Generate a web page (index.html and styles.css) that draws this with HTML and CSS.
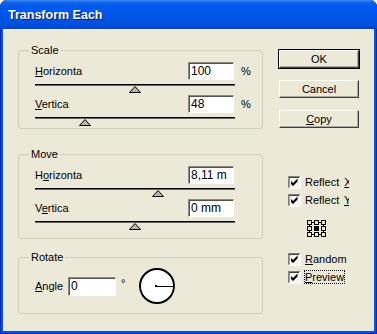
FILE: index.html
```html
<!DOCTYPE html>
<html>
<head>
	<title>Transform Each</title>
	<meta charset="utf-8">
	<link rel="stylesheet" href="styles.css">
</head>
<body>
<div class="window">
	<div class="titlebar">Transform Each</div>
	<div class="client">
		<div class="groups">
			<div class="group scale">
				<div class="group-title">Scale</div>
				<div class="row">
					<span class="label"><u>H</u>orizonta</span>
					<input class="field" type="text" value="100">
					<span class="unit">%</span>
				</div>
				<div class="slider">
					<svg class="thumb" style="left: 94px;" width="12" height="7" viewBox="0 0 12 7"><polygon points="6,0.5 11.5,6.5 0.5,6.5" fill="#b8b5a8" stroke="#000"/></svg>
				</div>
				<div class="row">
					<span class="label"><u>V</u>ertica</span>
					<input class="field" type="text" value="48">
					<span class="unit">%</span>
				</div>
				<div class="slider">
					<svg class="thumb" style="left: 44px;" width="12" height="7" viewBox="0 0 12 7"><polygon points="6,0.5 11.5,6.5 0.5,6.5" fill="#b8b5a8" stroke="#000"/></svg>
				</div>
			</div>

			<div class="group move">
				<div class="group-title">Move</div>
				<div class="row">
					<span class="label">H<u>o</u>rizonta</span>
					<input class="field" type="text" value="8,11 m">
				</div>
				<div class="slider">
					<svg class="thumb" style="left: 117px;" width="12" height="7" viewBox="0 0 12 7"><polygon points="6,0.5 11.5,6.5 0.5,6.5" fill="#b8b5a8" stroke="#000"/></svg>
				</div>
				<div class="row">
					<span class="label">V<u>e</u>rtica</span>
					<input class="field" type="text" value="0 mm">
				</div>
				<div class="slider">
					<svg class="thumb" style="left: 94px;" width="12" height="7" viewBox="0 0 12 7"><polygon points="6,0.5 11.5,6.5 0.5,6.5" fill="#b8b5a8" stroke="#000"/></svg>
				</div>
			</div>

			<div class="group rotate">
				<div class="group-title">Rotate</div>
				<div class="angle-row">
					<span class="angle-label"><u>A</u>ngle</span>
					<input class="field angle" type="text" value="0">
					<span class="degree">°</span>
					<svg class="dial" width="38" height="38" viewBox="0 0 38 38">
						<circle cx="19" cy="19" r="17" fill="#fff" stroke="#000" stroke-width="2"/>
						<line x1="18" y1="19.5" x2="36" y2="19.5" stroke="#000" stroke-width="1"/>
						<rect x="17" y="18" width="2" height="2" fill="#000"/>
					</svg>
				</div>
			</div>
		</div>

		<div class="side">
			<button class="btn default">OK</button>
			<button class="btn">Cancel</button>
			<button class="btn"><u>C</u>opy</button>

			<div class="checks">
				<label class="check">
					<svg width="13" height="13" viewBox="0 0 13 13"><rect x="0" y="0" width="13" height="13" fill="#fff"/><path d="M0 12.5V0.5H12" fill="none" stroke="#808080"/><path d="M1 11.5V1.5H11" fill="none" stroke="#404040"/><path d="M1 12.5H12.5V1" fill="none" stroke="#fff"/><rect x="2" y="2" width="10" height="10" fill="#f6f5f0"/><polygon points="3,5 5,7 9.5,2.5 9.5,5.5 5,10 3,8" fill="#000"/></svg>
					<span class="clip">Reflect <u>X</u></span>
				</label>
				<label class="check">
					<svg width="13" height="13" viewBox="0 0 13 13"><rect x="0" y="0" width="13" height="13" fill="#fff"/><path d="M0 12.5V0.5H12" fill="none" stroke="#808080"/><path d="M1 11.5V1.5H11" fill="none" stroke="#404040"/><path d="M1 12.5H12.5V1" fill="none" stroke="#fff"/><rect x="2" y="2" width="10" height="10" fill="#f6f5f0"/><polygon points="3,5 5,7 9.5,2.5 9.5,5.5 5,10 3,8" fill="#000"/></svg>
					<span class="clip">Reflect <u>Y</u></span>
				</label>

				<svg class="refpoint" width="19" height="17" viewBox="0 0 19 17">
					<g fill="none" stroke="#000">
						<line x1="5" y1="2.5" x2="7" y2="2.5"/>
						<line x1="12" y1="2.5" x2="14" y2="2.5"/>
						<line x1="5" y1="14.5" x2="7" y2="14.5"/>
						<line x1="12" y1="14.5" x2="14" y2="14.5"/>
						<line x1="2.5" y1="5" x2="2.5" y2="6"/>
						<line x1="2.5" y1="11" x2="2.5" y2="12"/>
						<line x1="16.5" y1="5" x2="16.5" y2="6"/>
						<line x1="16.5" y1="11" x2="16.5" y2="12"/>
						<rect x="0.5" y="0.5" width="4" height="4"/>
						<rect x="7.5" y="0.5" width="4" height="4"/>
						<rect x="14.5" y="0.5" width="4" height="4"/>
						<rect x="0.5" y="6.5" width="4" height="4"/>
						<rect x="14.5" y="6.5" width="4" height="4"/>
						<rect x="0.5" y="12.5" width="4" height="4"/>
						<rect x="7.5" y="12.5" width="4" height="4"/>
						<rect x="14.5" y="12.5" width="4" height="4"/>
					</g>
					<rect x="7" y="6" width="5" height="5" fill="#000"/>
				</svg>

				<label class="check">
					<svg width="13" height="13" viewBox="0 0 13 13"><rect x="0" y="0" width="13" height="13" fill="#fff"/><path d="M0 12.5V0.5H12" fill="none" stroke="#808080"/><path d="M1 11.5V1.5H11" fill="none" stroke="#404040"/><path d="M1 12.5H12.5V1" fill="none" stroke="#fff"/><rect x="2" y="2" width="10" height="10" fill="#f6f5f0"/><polygon points="3,5 5,7 9.5,2.5 9.5,5.5 5,10 3,8" fill="#000"/></svg>
					<span><u>R</u>andom</span>
				</label>
				<label class="check">
					<svg width="13" height="13" viewBox="0 0 13 13"><rect x="0" y="0" width="13" height="13" fill="#fff"/><path d="M0 12.5V0.5H12" fill="none" stroke="#808080"/><path d="M1 11.5V1.5H11" fill="none" stroke="#404040"/><path d="M1 12.5H12.5V1" fill="none" stroke="#fff"/><rect x="2" y="2" width="10" height="10" fill="#f6f5f0"/><polygon points="3,5 5,7 9.5,2.5 9.5,5.5 5,10 3,8" fill="#000"/></svg>
					<span class="focus"><u>P</u>review</span>
				</label>
			</div>
		</div>
	</div>
</div>
</body>
</html>
```

FILE: styles.css
```css
*{
	margin: 0px;
	padding: 0px;
	box-sizing: border-box;
}
body{
	background-color: #fff;
	font-family: "Liberation Sans", Arial, sans-serif;
	font-size: 11px;
	color: #000;
}
.window{
	width: 377px;
	height: 334px;
	display: flex;
	flex-direction: column;
	border-radius: 7px 7px 0 0;
	background: linear-gradient(#0a4fd8, #0652e6 40px, #0553e6);
	box-shadow: inset 1px 0 0 #0029b8, inset -1px 0 0 #0029b8, inset 0 -1px 0 #0029b8;
	overflow: hidden;
}
.titlebar{
	height: 29px;
	display: flex;
	align-items: center;
	padding-left: 8px;
	padding-top: 1px;
	background: linear-gradient(#3f8cf3 0px, #0a5de8 3px, #0058ee 8px, #0055e5 18px, #0050dd 25px, #0044cc 29px);
	border-radius: 7px 7px 0 0;
	color: #fff;
	font-size: 12.5px;
	font-weight: bold;
	text-shadow: 1px 1px 0 #0a1880;
}
.client{
	flex: 1;
	margin: 0 3px 3px 3px;
	background-color: #ece9d8;
	display: flex;
}
.groups{
	padding: 21px 0 0 15px;
	width: 260px;
}
.group{
	border: 1px solid #d0d0bf;
	border-radius: 3px;
	padding: 0 0 0 16px;
}
.group-title{
	display: table;
	margin: -7px 0 0 -6px;
	padding: 0 2px;
	height: 13px;
	line-height: 13px;
	background-color: #ece9d8;
}
.move{
	margin-top: 25px;
	padding-bottom: 6px;
}
.rotate{
	margin-top: 18px;
	padding-bottom: 8px;
}
.row{
	display: flex;
	align-items: center;
	height: 18px;
	margin-top: 5px;
}
.slider + .row{
	margin-top: 0px;
}
.label{
	width: 153px;
	flex-shrink: 0;
}
.field{
	width: 46px;
	height: 18px;
	flex-shrink: 0;
	border: 1px solid;
	border-color: #8f8c7e #fff #fff #8f8c7e;
	box-shadow: inset 1px 1px 0 #55534a;
	background-color: #fff;
	font-family: "Liberation Sans", Arial, sans-serif;
	font-size: 12px;
	padding: 0 2px;
	outline: none;
}
.unit{
	margin-left: 7px;
}
.slider{
	position: relative;
	width: 200px;
	height: 15px;
}
.slider:before{
	content: "";
	position: absolute;
	left: 0px;
	right: 0px;
	top: 4px;
	height: 2px;
	background: linear-gradient(#000 1px, #6b695f 1px);
}
.thumb{
	position: absolute;
	top: 6px;
}
.angle-row{
	display: flex;
	align-items: center;
	height: 38px;
	margin-top: 3px;
}
.angle-label{
	width: 33px;
}
.angle{
	width: 48px;
	height: 19px;
}
.degree{
	margin-left: 5px;
	margin-top: -6px;
}
.dial{
	margin-left: 13px;
}
.side{
	padding: 21px 0 0 16px;
}
.btn{
	display: block;
	width: 80px;
	height: 18px;
	margin-bottom: 12px;
	background-color: #ece9d8;
	border: 1px solid;
	border-color: #fff #404040 #404040 #fff;
	box-shadow: inset -1px -1px 0 #aca899;
	font-family: "Liberation Sans", Arial, sans-serif;
	font-size: 11px;
	color: #000;
}
.btn.default{
	outline: 1px solid #000;
	outline-offset: 0px;
}
.checks{
	padding: 33px 0 0 9px;
}
.check{
	display: flex;
	align-items: center;
	height: 18px;
	gap: 4px;
}
.clip{
	display: block;
	width: 44px;
	overflow: hidden;
	white-space: nowrap;
	word-spacing: 2px;
}
.refpoint{
	display: block;
	margin: 11px 0 13px 19px;
}
.focus{
	outline: 1px dotted #000;
	outline-offset: 0px;
}
```
